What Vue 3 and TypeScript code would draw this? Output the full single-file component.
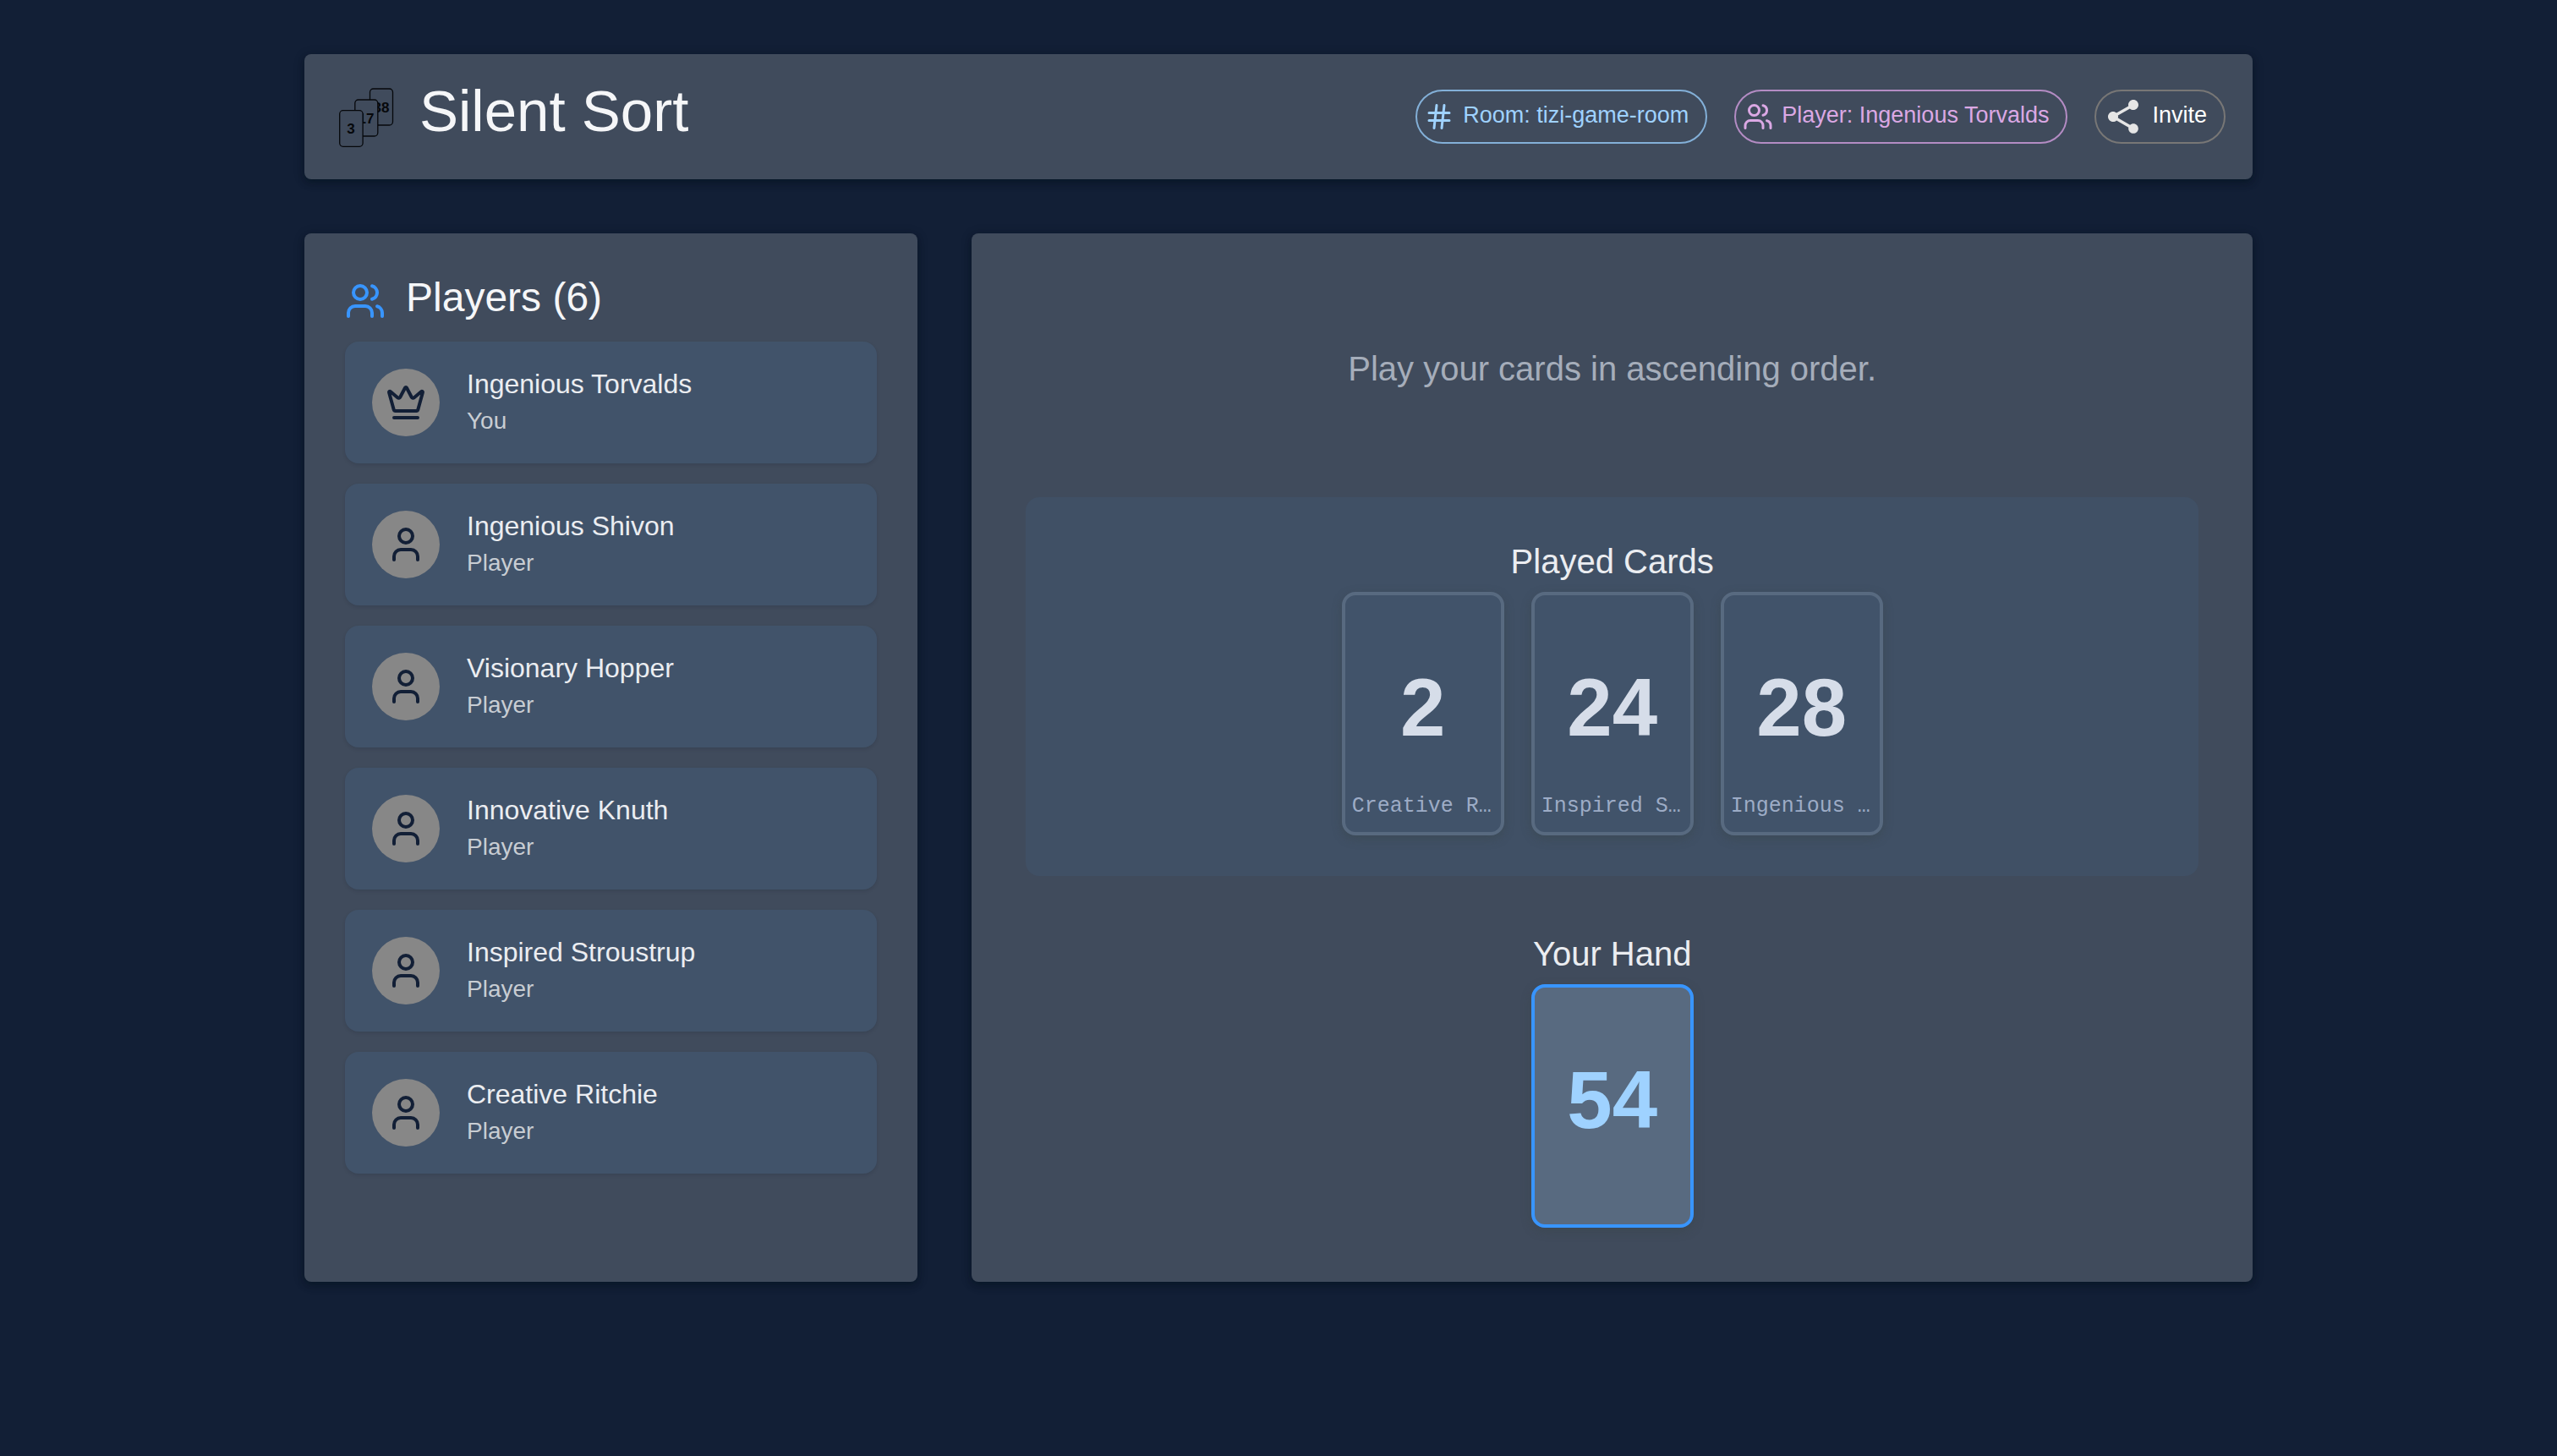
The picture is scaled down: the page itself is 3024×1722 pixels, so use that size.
<script setup lang="ts">
interface Player {
  name: string
  role: string
  host: boolean
}

interface PlayedCard {
  value: number
  player: string
}

const room = 'tizi-game-room'
const me = 'Ingenious Torvalds'

const players: Player[] = [
  { name: 'Ingenious Torvalds', role: 'You', host: true },
  { name: 'Ingenious Shivon', role: 'Player', host: false },
  { name: 'Visionary Hopper', role: 'Player', host: false },
  { name: 'Innovative Knuth', role: 'Player', host: false },
  { name: 'Inspired Stroustrup', role: 'Player', host: false },
  { name: 'Creative Ritchie', role: 'Player', host: false },
]

const played: PlayedCard[] = [
  { value: 2, player: 'Creative Ritchie' },
  { value: 24, player: 'Inspired Stroustrup' },
  { value: 28, player: 'Ingenious Shivon' },
]

const hand: number[] = [54]

// A card is eleven monospace characters wide, ellipsis included.
function shorten(name: string): string {
  return name.length > 11 ? `${name.slice(0, 10)}…` : name
}
</script>

<template>
  <div class="container">
    <header class="panel header">
      <div class="brand">
        <svg class="logo" viewBox="0 0 80 80" aria-hidden="true">
          <g class="logo-card">
            <rect x="45.5" y="7" width="27" height="43" rx="4" />
            <text x="59" y="35" text-anchor="middle">38</text>
          </g>
          <g class="logo-card">
            <rect x="27.8" y="20" width="27" height="43" rx="4" />
            <text x="41" y="48" text-anchor="middle">17</text>
          </g>
          <g class="logo-card">
            <rect x="9.7" y="32.7" width="27.4" height="42.6" rx="4" />
            <text x="23" y="60" text-anchor="middle">3</text>
          </g>
        </svg>
        <h1>Silent Sort</h1>
      </div>
      <div class="chips">
        <div class="chip chip-room">
          <svg class="icon" viewBox="0 0 24 24" aria-hidden="true">
            <path d="M4 9h16M4 15h16M10 3 8 21M16 3l-2 18" />
          </svg>
          <span>Room: {{ room }}</span>
        </div>
        <div class="chip chip-player">
          <svg class="icon" viewBox="0 0 24 24" aria-hidden="true">
            <path d="M16 21v-2a4 4 0 0 0-4-4H6a4 4 0 0 0-4 4v2" />
            <circle cx="9" cy="7" r="4" />
            <path d="M22 21v-2a4 4 0 0 0-3-3.87M16 3.13a4 4 0 0 1 0 7.75" />
          </svg>
          <span>Player: {{ me }}</span>
        </div>
        <button type="button" class="chip chip-invite">
          <svg class="share" viewBox="0 0 24 24" aria-hidden="true">
            <path
              d="M18 16.08c-.76 0-1.44.3-1.96.77L8.91 12.7c.05-.23.09-.46.09-.7s-.04-.47-.09-.7l7.05-4.11c.54.5 1.25.81 2.04.81 1.66 0 3-1.34 3-3s-1.34-3-3-3-3 1.34-3 3c0 .24.04.47.09.7L8.04 9.81C7.5 9.31 6.79 9 6 9c-1.66 0-3 1.34-3 3s1.34 3 3 3c.79 0 1.5-.31 2.04-.81l7.12 4.16c-.05.21-.08.43-.08.65 0 1.61 1.31 2.92 2.92 2.92s2.92-1.31 2.92-2.92-1.31-2.92-2.92-2.92z"
            />
          </svg>
          <span>Invite</span>
        </button>
      </div>
    </header>

    <main class="columns">
      <section class="panel players">
        <div class="players-title">
          <svg class="icon" viewBox="0 0 24 24" aria-hidden="true">
            <path d="M16 21v-2a4 4 0 0 0-4-4H6a4 4 0 0 0-4 4v2" />
            <circle cx="9" cy="7" r="4" />
            <path d="M22 21v-2a4 4 0 0 0-3-3.87M16 3.13a4 4 0 0 1 0 7.75" />
          </svg>
          <h2>Players ({{ players.length }})</h2>
        </div>
        <ul class="player-list">
          <li v-for="player in players" :key="player.name" class="player">
            <span class="avatar">
              <svg v-if="player.host" class="icon" viewBox="0 0 24 24" aria-hidden="true">
                <path
                  d="M11.562 3.266a.5.5 0 0 1 .876 0L15.39 8.87a1 1 0 0 0 1.516.294L21.183 5.5a.5.5 0 0 1 .798.519l-2.834 10.246a1 1 0 0 1-.956.734H5.81a1 1 0 0 1-.957-.734L2.02 6.02a.5.5 0 0 1 .798-.519l4.276 3.664a1 1 0 0 0 1.516-.294zM5 21h14"
                />
              </svg>
              <svg v-else class="icon" viewBox="0 0 24 24" aria-hidden="true">
                <circle cx="12" cy="7" r="4" />
                <path d="M19 21v-2a4 4 0 0 0-4-4H9a4 4 0 0 0-4 4v2" />
              </svg>
            </span>
            <div class="player-text">
              <div class="player-name">{{ player.name }}</div>
              <div class="player-role">{{ player.role }}</div>
            </div>
          </li>
        </ul>
      </section>

      <section class="panel board">
        <p class="message">Play your cards in ascending order.</p>
        <div class="pile">
          <h3>Played Cards</h3>
          <div class="cards">
            <div v-for="card in played" :key="card.value" class="card">
              <span class="value">{{ card.value }}</span>
              <span class="owner" :title="card.player">{{ shorten(card.player) }}</span>
            </div>
          </div>
        </div>
        <div class="hand">
          <h3>Your Hand</h3>
          <div class="cards">
            <button v-for="value in hand" :key="value" type="button" class="card card-own">
              <span class="value">{{ value }}</span>
            </button>
          </div>
        </div>
      </section>
    </main>
  </div>
</template>

<style>
body {
  margin: 0;
  background: #121f36;
}
</style>

<style scoped>
.container {
  box-sizing: border-box;
  max-width: 2400px;
  min-height: 100vh;
  margin: 0 auto;
  padding: 64px 48px;
  font-family: "Liberation Sans", Arial, sans-serif;
  color: #f5f6f8;
}

h1,
h2,
h3,
p,
ul {
  margin: 0;
  padding: 0;
  font-weight: 400;
}

.panel {
  background: #404b5c;
  border-radius: 8px;
  box-shadow:
    0 4px 6px -2px rgba(0, 20, 30, 0.3),
    0 4px 8px rgba(0, 20, 30, 0.24),
    0 2px 14px rgba(0, 20, 30, 0.2);
}

.icon {
  flex: none;
  width: 48px;
  height: 48px;
  fill: none;
  stroke: currentColor;
  stroke-width: 2;
  stroke-linecap: round;
  stroke-linejoin: round;
}

.header {
  display: flex;
  align-items: center;
  justify-content: space-between;
  padding: 32px;
}

.brand {
  display: flex;
  align-items: center;
  gap: 24px;
}

.logo {
  flex: none;
  width: 80px;
  height: 80px;
}

.logo-card rect {
  fill: #404b5c;
  stroke: #06080b;
  stroke-width: 1.3;
}

.logo-card text {
  fill: #06080b;
  font-size: 17px;
  font-weight: 700;
}

h1 {
  padding-bottom: 12px;
  font-size: 69px;
  line-height: 72px;
}

.chips {
  display: flex;
  gap: 32px;
}

.chip {
  box-sizing: border-box;
  display: flex;
  align-items: center;
  gap: 10px;
  height: 64px;
  padding: 0 20px 0 8px;
  border: 2px solid;
  border-radius: 32px;
  background: none;
  font-family: inherit;
  font-size: 27px;
  line-height: 32px;
  white-space: nowrap;
}

.chip span {
  padding-bottom: 4px;
}

.chip .icon {
  width: 36px;
  height: 36px;
}

.chip-room {
  border-color: #83b0d8;
  color: #9fd2ff;
}

.chip-player {
  border-color: #b48cc4;
  color: #dba8e4;
}

.chip-invite {
  border-color: #787776;
  color: #ffffff;
  cursor: pointer;
}

.share {
  width: 48px;
  height: 48px;
  fill: #e6e6e6;
}

.columns {
  display: grid;
  grid-template-columns: repeat(3, minmax(0, 1fr));
  gap: 64px;
  margin-top: 64px;
}

.players {
  padding: 48px;
}

.players-title {
  display: flex;
  align-items: center;
  gap: 24px;
  margin-bottom: 16px;
}

.players-title .icon {
  color: #3895ff;
}

h2 {
  padding-bottom: 8px;
  font-size: 48px;
  line-height: 56px;
}

.player-list {
  display: flex;
  flex-direction: column;
  gap: 24px;
  list-style: none;
}

.player {
  display: flex;
  align-items: center;
  gap: 32px;
  padding: 26px 32px;
  border-radius: 16px;
  background: #41536a;
  box-shadow: 0 2px 4px rgba(0, 20, 30, 0.12);
}

.avatar {
  display: grid;
  flex: none;
  place-items: center;
  width: 80px;
  height: 80px;
  border-radius: 50%;
  background: #878787;
  color: #121f36;
}

.player-text {
  padding-bottom: 4px;
}

.player-name {
  color: #ebedf1;
  font-size: 32px;
  line-height: 48px;
}

.player-role {
  color: #c8cdd3;
  font-size: 28px;
  line-height: 40px;
}

.board {
  display: flex;
  flex-direction: column;
  grid-column: span 2;
  padding: 64px;
}

.message {
  display: grid;
  place-items: center;
  min-height: 192px;
  margin-bottom: 48px;
  padding-bottom: 8px;
  color: #a5adba;
  font-size: 40px;
  line-height: 64px;
}

.pile {
  padding: 48px;
  border-radius: 16px;
  background: #405065;
}

.hand {
  margin-top: 64px;
}

h3 {
  padding-bottom: 8px;
  color: #ebedf1;
  font-size: 40px;
  line-height: 56px;
  text-align: center;
}

.cards {
  display: flex;
  flex-wrap: wrap;
  justify-content: center;
  gap: 32px;
}

.card {
  box-sizing: border-box;
  display: grid;
  grid-template-columns: minmax(0, 1fr);
  width: 192px;
  height: 288px;
  padding: 8px;
  border: 4px solid #586a80;
  border-radius: 16px;
  background: #41536a;
  color: #d6dde9;
  font-family: inherit;
  box-shadow: 0 4px 12px rgba(56, 68, 68, 0.4);
}

.card-own {
  border-color: #3895ff;
  background: #586a80;
  color: #9fd2ff;
  cursor: pointer;
}

.value {
  grid-area: 1 / 1;
  place-self: center;
  padding-bottom: 14px;
  font-size: 96px;
  font-weight: 700;
  line-height: 112px;
}

.owner {
  grid-area: 1 / 1;
  align-self: end;
  color: #9dacc6;
  font-family: "Liberation Mono", monospace;
  font-size: 25px;
  line-height: 44px;
  white-space: pre;
}
</style>
